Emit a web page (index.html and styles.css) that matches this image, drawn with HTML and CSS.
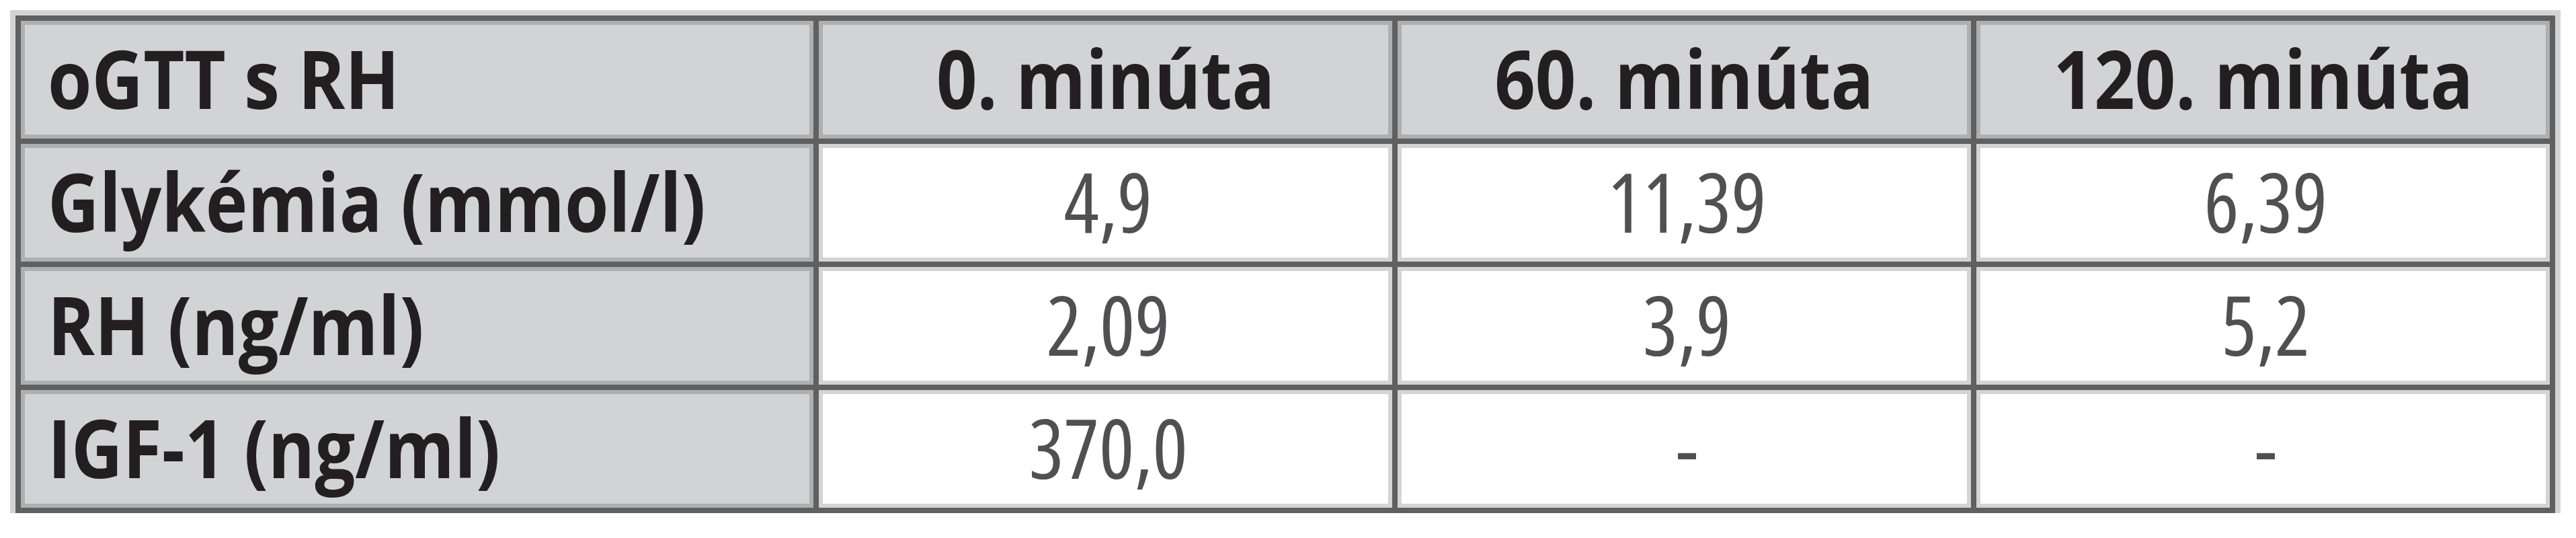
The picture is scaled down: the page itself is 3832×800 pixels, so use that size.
FILE: index.html
```html
<!DOCTYPE html>
<html lang="sk">
<head>
<meta charset="utf-8">
<title>oGTT s RH</title>
<link rel="stylesheet" href="styles.css">
</head>
<body>
<div class="tbl" role="table">
  <div class="cell head label" role="columnheader"><span class="txt">oGTT s RH</span></div>
  <div class="cell head" role="columnheader"><span class="txt">0. minúta</span></div>
  <div class="cell head" role="columnheader"><span class="txt">60. minúta</span></div>
  <div class="cell head" role="columnheader"><span class="txt">120. minúta</span></div>

  <div class="cell head label" role="rowheader"><span class="txt">Glykémia (mmol/l)</span></div>
  <div class="cell val" role="cell"><span class="txt">4,9</span></div>
  <div class="cell val" role="cell"><span class="txt">11,39</span></div>
  <div class="cell val" role="cell"><span class="txt">6,39</span></div>

  <div class="cell head label" role="rowheader"><span class="txt">RH (ng/ml)</span></div>
  <div class="cell val" role="cell"><span class="txt">2,09</span></div>
  <div class="cell val" role="cell"><span class="txt">3,9</span></div>
  <div class="cell val" role="cell"><span class="txt">5,2</span></div>

  <div class="cell head label" role="rowheader"><span class="txt">IGF-1 (ng/ml)</span></div>
  <div class="cell val" role="cell"><span class="txt">370,0</span></div>
  <div class="cell val" role="cell"><span class="txt">-</span></div>
  <div class="cell val" role="cell"><span class="txt">-</span></div>
</div>
</body>
</html>
```
FILE: styles.css
```css
html, body {
  margin: 0;
  padding: 0;
  background: #ffffff;
}

body {
  font-family: "Open Sans", "Noto Sans", "DejaVu Sans", sans-serif;
}

.tbl {
  display: grid;
  grid-template-columns: 1179px repeat(3, 853px);
  grid-auto-rows: 175px;
  gap: 8px;
  padding: 8px;
  margin: 23px 0 0 23px;
  width: max-content;
  background: #606060;
  box-shadow: 0 0 0 8px #d4d4d4;
}

.cell {
  display: flex;
  align-items: center;
  justify-content: center;
  box-shadow: inset 0 0 0 6px rgba(0, 0, 0, 0.17);
  padding-bottom: 6px;
  box-sizing: border-box;
  line-height: 1.2;
}

.head {
  background: #d1d3d4;
  color: #231f20;
  font-weight: 700;
  font-size: 121px;
  font-stretch: 100%;
}

.head .txt {
  transform: scaleX(0.875);
  transform-origin: center center;
}

.label {
  justify-content: flex-start;
  padding-left: 40px;
}

.label .txt {
  transform-origin: left center;
}

.val {
  background: #ffffff;
  color: #505052;
  font-weight: 400;
  font-size: 123px;
  font-stretch: 87.5%;
  padding-left: 8px;
}

.txt {
  display: inline-block;
  white-space: nowrap;
}
```
